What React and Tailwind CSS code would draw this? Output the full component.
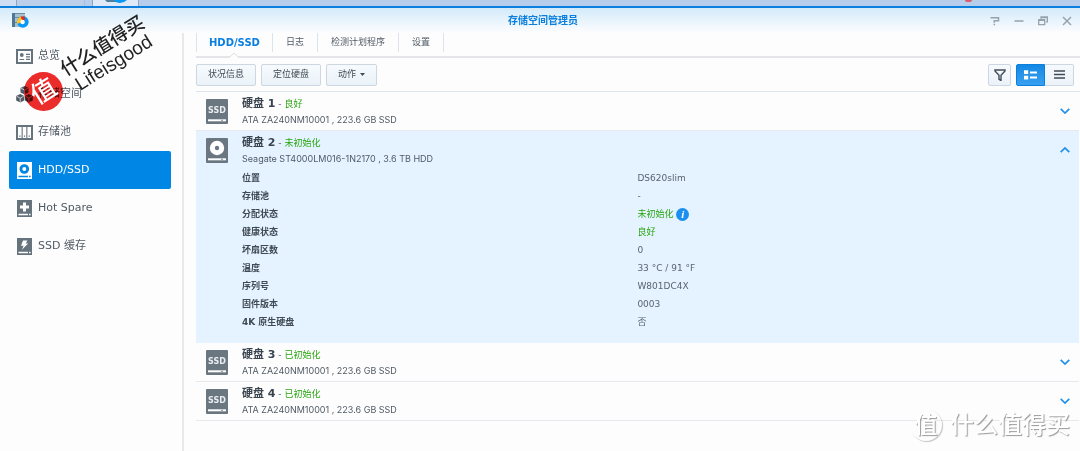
import React, { useState } from 'react';

const NAV_ITEMS = [
  { id: 'overview', label: '总览', icon: OverviewIcon },
  { id: 'volume', label: '存储空间', icon: VolumeIcon },
  { id: 'pool', label: '存储池', icon: PoolIcon },
  { id: 'disk', label: 'HDD/SSD', icon: NavDiskIcon },
  { id: 'spare', label: 'Hot Spare', icon: SpareIcon },
  { id: 'cache', label: 'SSD 缓存', icon: CacheIcon },
];

const TABS = ['HDD/SSD', '日志', '检测计划程序', '设置'];

const DISKS = [
  { id: 1, name: '硬盘 1', status: '良好', model: 'ATA ZA240NM10001 , 223.6 GB SSD', type: 'ssd' },
  {
    id: 2,
    name: '硬盘 2',
    status: '未初始化',
    model: 'Seagate ST4000LM016-1N2170 , 3.6 TB HDD',
    type: 'hdd',
    details: [
      { label: '位置', value: 'DS620slim' },
      { label: '存储池', value: '-' },
      { label: '分配状态', value: '未初始化', good: true, info: true },
      { label: '健康状态', value: '良好', good: true },
      { label: '坏扇区数', value: '0' },
      { label: '温度', value: '33 °C / 91 °F' },
      { label: '序列号', value: 'W801DC4X' },
      { label: '固件版本', value: '0003' },
      { label: '4K 原生硬盘', value: '否' },
    ],
  },
  { id: 3, name: '硬盘 3', status: '已初始化', model: 'ATA ZA240NM10001 , 223.6 GB SSD', type: 'ssd' },
  { id: 4, name: '硬盘 4', status: '已初始化', model: 'ATA ZA240NM10001 , 223.6 GB SSD', type: 'ssd' },
];

function OverviewIcon() {
  return (
    <svg viewBox="0 0 17 17" className="h-[17px] w-[17px] text-[#66727c]" fill="none" stroke="currentColor">
      <path d="M1 2h15v13H1z" strokeWidth="2" />
      <circle cx="5.8" cy="7" r="1.9" fill="currentColor" stroke="none" />
      <path d="M3.5 11.5h4.6M10 6.3h4M10 8.8h4M10 11.3h4" strokeWidth="1.2" />
    </svg>
  );
}

function Cube({ x, y }) {
  return (
    <g transform={`translate(${x} ${y})`}>
      <path d="M4 0l4 2v4.4l-4 2.2-4-2.2V2z" fill="currentColor" />
      <path d="M.6 2.3L4 4.1l3.4-1.8M4 4.1v4.2" fill="none" stroke="#fff" strokeWidth=".7" />
    </g>
  );
}

function VolumeIcon() {
  return (
    <svg viewBox="0 0 17 17" className="h-[17px] w-[17px] text-[#505a64]">
      <Cube x={4.5} y={0} />
      <Cube x={0.2} y={8} />
      <Cube x={8.8} y={8} />
    </svg>
  );
}

function PoolIcon() {
  return (
    <svg viewBox="0 0 17 17" className="h-[17px] w-[17px] text-[#66727c]">
      <path d="M0 1h17v15H0z" fill="currentColor" />
      <path d="M2 3h3.6v11H2zM6.7 3h3.6v11H6.7zM11.4 3H15v11h-3.6z" fill="#fff" />
      <path d="M3.2 11.4h1.3v1.4H3.2zM7.9 11.4h1.3v1.4H7.9zM12.6 11.4h1.3v1.4h-1.3z" fill="currentColor" />
    </svg>
  );
}

function NavDiskIcon() {
  return (
    <svg viewBox="0 0 17 17" className="h-[17px] w-[17px]">
      <path d="M1 0h15v17H1z" fill="#fff" />
      <circle cx="8.3" cy="7" r="3.4" fill="none" stroke="#0086e5" strokeWidth="2.8" />
      <path d="M2.5 14.5h9.5M13 14.5h1.6" stroke="#0086e5" strokeWidth="1.3" />
    </svg>
  );
}

function SpareIcon() {
  return (
    <svg viewBox="0 0 17 17" className="h-[17px] w-[17px] text-[#66727c]">
      <path d="M1 0h15v17H1z" fill="currentColor" />
      <path d="M8.5 2.5v9M4 7h9" stroke="#fff" strokeWidth="3" />
      <path d="M2.5 14.5h9.5M13 14.5h1.6" stroke="#fff" strokeWidth="1.3" />
    </svg>
  );
}

function CacheIcon() {
  return (
    <svg viewBox="0 0 17 17" className="h-[17px] w-[17px] text-[#66727c]">
      <path d="M1 0h15v17H1z" fill="currentColor" />
      <path d="M7 2.500h4.400L9.800 5.600h2.400L6 11.800l1.500-4.100H5z" fill="#fff" />
      <path d="M2.500 14.500h9.500M13 14.500h1.600" stroke="#fff" strokeWidth="1.3" />
    </svg>
  );
}

function DiskIcon({ type }) {
  return (
    <svg viewBox="0 0 22 25" className="h-[25px] w-[22px] shrink-0">
      <rect width="22" height="25" rx="1" fill="#6a7680" />
      {type === 'ssd' ? (
        <text x="11" y="14" textAnchor="middle" fontSize="8" fontWeight="bold" fill="#e9edf0">
          SSD
        </text>
      ) : (
        <>
          <circle cx="11" cy="10" r="7.2" fill="#fff" />
          <circle cx="11" cy="10" r="2.2" fill="#6a7680" />
        </>
      )}
      <path d="M2 21.3h18" stroke="#fff" strokeWidth="2" />
      <path d="M15 21.3h2" stroke="#6a7680" strokeWidth=".8" />
    </svg>
  );
}

function AppLogo() {
  return (
    <svg viewBox="0 0 18 17" className="h-[17px] w-[18px]">
      <path d="M1 1h13v14H1z" fill="#a9c0ce" />
      <path d="M1 1h3v14H1z" fill="#4d7896" />
      <path d="M4 1h10v1H4zM4 5h10v1H4zM4 10h10v1H4z" fill="#6b8da3" />
      <circle cx="11.8" cy="9.800" r="5.900" fill="#0a98f5" />
      <path d="M11.800 9.800V4a6 6 0 0 0-5.600 8z" fill="#fbc52d" />
      <path d="M9.500 4.500h4.300v4h-2.500z" fill="#e02b27" />
      <circle cx="11.600" cy="10" r="2.200" fill="#fff" />
    </svg>
  );
}

function Chevron({ open }) {
  return (
    <svg viewBox="0 0 10 6" className="h-[6px] w-[10px]" fill="none" stroke="#1e90e8" strokeWidth="1.7">
      <path d={open ? 'M.7 5.2L5 1l4.3 4.2' : 'M.7.8L5 5 9.3.8'} />
    </svg>
  );
}

function WindowControls() {
  const base = 'flex h-4 w-4 items-center justify-center text-[#96a2ad]';
  return (
    <div className="flex items-center gap-2">
      <button type="button" aria-label="Help" className={base}>
        <svg viewBox="0 0 10 10" className="h-[10px] w-[10px]" fill="none" stroke="currentColor" strokeWidth="1.5">
          <path d="M.5 1.700h8v3H4.300v2M4.300 7.700v1.500" />
        </svg>
      </button>
      <button type="button" aria-label="Minimize" className={base}>
        <svg viewBox="0 0 10 10" className="h-[10px] w-[10px]" stroke="currentColor" strokeWidth="1.5">
          <path d="M.5 5h9" />
        </svg>
      </button>
      <button type="button" aria-label="Restore" className={base}>
        <svg viewBox="0 0 10 10" className="h-[10px] w-[10px]" fill="none" stroke="currentColor" strokeWidth="1.3">
          <path d="M3 2.800V1h6.400v4.800H8M3 1.600h6.400M.7 3.600h6v5h-6zM.7 4.400h6" />
        </svg>
      </button>
      <button type="button" aria-label="Close" className={base}>
        <svg viewBox="0 0 10 10" className="h-[10px] w-[10px]" stroke="currentColor" strokeWidth="1.5">
          <path d="M1 1l8 8M9 1L1 9" />
        </svg>
      </button>
    </div>
  );
}

function ToolButton({ children }) {
  return (
    <button
      type="button"
      className="flex h-[22px] items-center gap-1 rounded-[2px] border border-[#ccd7e2] bg-linear-to-b from-[#f7fafd] to-[#eaf2f9] px-[11px] text-[9px] text-[#414b55]"
    >
      {children}
    </button>
  );
}

function Taskbar() {
  return (
    <div className="flex h-[6px] bg-[#b7cdec]">
      <div className="w-[17px] border-r border-[#8ea6c6] bg-[#cfdef3]"></div>
      <div className="w-[68px] border-r border-[#a9bedd] bg-[#bccfea]"></div>
      <div className="ml-[7px] flex w-[47px] justify-center border-x border-[#8ea6c6] bg-[#dfe9f7]">
        <svg viewBox="0 0 22 3" className="h-[3px] w-[22px]">
          <path d="M0 0h12v2H2z" fill="#4f819f" />
          <path d="M9 0h13q-3 3-7 3t-6-3z" fill="#0a98f5" />
        </svg>
      </div>
      <div className="ml-auto mr-[108px] h-[2px] w-[7px] rounded-b-full bg-[#e05a68]"></div>
    </div>
  );
}

function DiskRow({ disk, open, onToggle }) {
  return (
    <li className={open ? 'bg-[#e4f3ff]' : 'border-b border-[#e6eaee]'}>
      <button
        type="button"
        aria-expanded={open}
        onClick={onToggle}
        className="flex h-[38px] w-full items-center pl-[10px] pr-[9px] text-left"
      >
        <DiskIcon type={disk.type} />
        <span className="ml-[14px] flex-1">
          <span className="block text-[9px] leading-[15px] text-[#5a646e]">
            <b className="text-[11px] text-[#3a444e]">{disk.name}</b> -{' '}
            <span className="text-[#27a50e]">{disk.status}</span>
          </span>
          <span className="block font-['Inter',sans-serif] text-[9px] leading-[15px] text-[#505a64]">{disk.model}</span>
        </span>
        <Chevron open={open} />
      </button>
      {open && disk.details && (
        <dl className="pb-[12px] pl-[46px] text-[9px] leading-[18px]">
          {disk.details.map((row) => (
            <div key={row.label} className="grid grid-cols-[47%_1fr] gap-[2px]">
              <dt className="font-bold text-[#414b55]">{row.label}</dt>
              <dd className={row.good ? 'flex items-center gap-[3px] text-[#27a50e]' : 'text-[#5a646e]'}>
                {row.value}
                {row.info && (
                  <span className="flex h-[13px] w-[13px] items-center justify-center rounded-full bg-[#1a8fee] font-['Liberation_Serif',serif] text-[11px] font-bold italic leading-none text-white">
                    i
                  </span>
                )}
              </dd>
            </div>
          ))}
        </dl>
      )}
    </li>
  );
}

const App = () => {
  const [page, setPage] = useState('disk');
  const [tab, setTab] = useState('HDD/SSD');
  const [openDisk, setOpenDisk] = useState(2);

  return (
    <div className="relative flex min-h-screen flex-col overflow-hidden bg-[#fdfdfe] font-['DejaVu_Sans','Noto_Sans_CJK_SC',sans-serif]">
      <Taskbar />

      {/* Title bar */}
      <header className="flex h-[27px] items-center border-t-2 border-[#0a7fdd] bg-linear-to-b from-[#d3eafa] to-[#fdfdfe] px-[11px]">
        <div className="flex-1">
          <AppLogo />
        </div>
        <h1 className="text-[10px] font-bold text-[#0a7fdd]">存储空间管理员</h1>
        <div className="-mr-[6px] flex flex-1 justify-end">
          <WindowControls />
        </div>
      </header>

      <div className="flex flex-1">
        {/* Sidebar */}
        <nav className="w-[184px] shrink-0 border-r-2 border-[#e6e8eb] pl-[9px] pr-[11px] pt-[4px]">
          {NAV_ITEMS.map(({ id, label, icon: Icon }) => (
            <button
              key={id}
              type="button"
              onClick={() => setPage(id)}
              className={`flex h-[38px] w-full items-center gap-[5px] rounded-[2px] pl-[7px] text-[11px] ${
                page === id ? 'bg-[#0086e5] text-white' : 'text-[#505a64]'
              }`}
            >
              <Icon />
              <span className="pt-px">{label}</span>
            </button>
          ))}
        </nav>

        <main className="min-w-0 flex-1 pl-[12px]">
          {/* Tabs */}
          <div className="flex h-[25px] border-b-2 border-[#e3e5e8] pb-[4px]">
            {TABS.map((name) => (
              <button
                key={name}
                type="button"
                onClick={() => setTab(name)}
                className={`relative border-r border-[#dbe4ee] text-center first:border-l ${
                  tab === name ? 'px-[12px] text-[10px] font-bold text-[#0a7fe0]' : 'px-[13px] text-[9px] text-[#505a64]'
                }`}
              >
                {name}
                {tab === name && (
                  <svg viewBox="0 0 10 6" className="absolute -bottom-[6px] left-1/2 h-[6px] w-[10px] -translate-x-1/2">
                    <path d="M0 6l5-5 5 5z" fill="#fdfdfe" />
                    <path d="M0 5.500l5-4.500 5 4.500" fill="none" stroke="#dcdfe2" />
                  </svg>
                )}
              </button>
            ))}
          </div>

          {/* Toolbar */}
          <div className="flex h-[34px] items-center gap-[5px] border-b border-[#dfe5ec] pr-[6px]">
            <ToolButton>状况信息</ToolButton>
            <ToolButton>定位硬盘</ToolButton>
            <ToolButton>
              动作
              <svg viewBox="0 0 5 3" className="h-[3px] w-[5px]">
                <path d="M0 0h5L2.500 3z" fill="#414b55" />
              </svg>
            </ToolButton>
            <button
              type="button"
              aria-label="Filter"
              className="ml-auto flex h-[22px] w-[23px] items-center justify-center rounded-[2px] border border-[#ccd7e2] bg-linear-to-b from-[#f7fafd] to-[#eaf2f9]"
            >
              <svg viewBox="0 0 12 12" className="h-[12px] w-[12px]" fill="none" stroke="#414b55" strokeWidth="1.4">
                <path d="M1 1h10v1L7 6.300v5.200L5 10.300v-4L1 2z" />
              </svg>
            </button>
            <div className="flex">
              <button
                type="button"
                aria-label="Detail view"
                className="flex h-[22px] w-[29px] items-center justify-center rounded-l-[2px] border border-[#0a7fdd] bg-linear-to-b from-[#1088e4] to-[#389ff0]"
              >
                <svg viewBox="0 0 13 10" className="h-[10px] w-[13px]" stroke="#fff">
                  <path d="M0 2.200h4.200M0 7.700h4.200" strokeWidth="3.800" />
                  <path d="M6 2.500h7M6 7.500h7" strokeWidth="1.800" />
                </svg>
              </button>
              <button
                type="button"
                aria-label="List view"
                className="flex h-[22px] w-[29px] items-center justify-center rounded-r-[2px] border border-l-0 border-[#ccd7e2] bg-linear-to-b from-[#f7fafd] to-[#eaf2f9]"
              >
                <svg viewBox="0 0 11 9" className="h-[9px] w-[11px]" stroke="#414b55" strokeWidth="1.300">
                  <path d="M0 1h11M0 4.500h11M0 8h11" />
                </svg>
              </button>
            </div>
          </div>

          {/* Disk list */}
          <ul className="mr-px">
            {DISKS.map((disk) => (
              <DiskRow
                key={disk.id}
                disk={disk}
                open={openDisk === disk.id}
                onToggle={() => setOpenDisk(openDisk === disk.id ? null : disk.id)}
              />
            ))}
          </ul>
        </main>
      </div>

      {/* Stamp over the sidebar */}
      <div className="pointer-events-none absolute left-[24px] top-[72px] h-[39px] w-[39px] rounded-full bg-[#ee2b2b] mix-blend-multiply"></div>
      <div className="pointer-events-none absolute left-[24px] top-[72px] flex h-[39px] w-[39px] -rotate-32 items-center justify-center text-[25px] font-medium leading-none text-white">
        值
      </div>
      <div className="pointer-events-none absolute left-[57px] top-[63px] origin-top-left -rotate-32 whitespace-nowrap font-['Liberation_Sans','Noto_Sans_CJK_SC',sans-serif] font-medium leading-[20px] text-[#222]">
        <div className="text-[19px]">什么值得买</div>
        <div className="pl-[5px] text-[19px]">Lifeisgood</div>
      </div>

      {/* Corner watermark */}
      <div className="pointer-events-none absolute bottom-[10px] right-[10px] flex items-center gap-2 font-medium text-white">
        <span className="flex h-[32px] w-[32px] items-center justify-center rounded-full text-[23px] leading-none shadow-[1px_1px_1px_#c4c4c4] text-shadow-[1px_1px_1px_#999]">
          值
        </span>
        <span className="text-[24px] leading-none text-shadow-[1px_1px_1px_#999]">什么值得买</span>
      </div>
    </div>
  );
};

export default App;
